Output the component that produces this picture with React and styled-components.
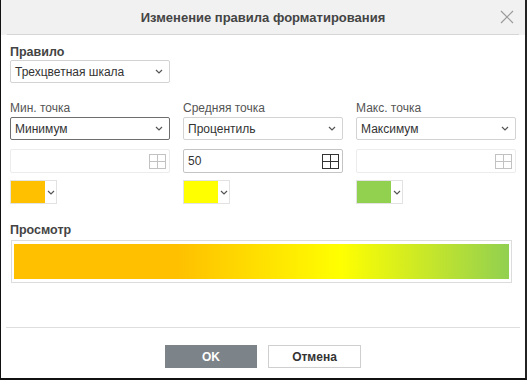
import React from "react";
import styled, { createGlobalStyle } from "styled-components";

const GlobalStyle = createGlobalStyle`
  html, body {
    margin: 0;
    padding: 0;
    background: #ffffff;
  }
  body {
    font-family: "Liberation Sans", Arial, sans-serif;
  }
`;

const Frame = styled.div`
  box-sizing: border-box;
  width: 527px;
  height: 380px;
  background: #ffffff;
  border-left: 1px solid #111;
  border-right: 2px solid #222;
  border-bottom: 2px solid #111;
  display: flex;
  flex-direction: column;
`;

const Header = styled.div`
  background: #f1f1f1;
  padding: 0 6px;
`;

const HeaderInner = styled.div`
  height: 34px;
  display: grid;
  grid-template-columns: 1fr auto 1fr;
  align-items: center;
  border-bottom: 1px solid #d6d6d6;
`;

const Title = styled.div`
  grid-column: 2;
  font-size: 13px;
  font-weight: bold;
  color: #444;
`;

const Close = styled.button`
  justify-self: end;
  margin-right: 4px;
  width: 16px;
  height: 16px;
  padding: 0;
  border: 0;
  background: transparent;
  display: flex;
  align-items: center;
  justify-content: center;
`;

const Body = styled.div`
  flex: 1;
  padding: 9px 9px 0 9px;
  display: flex;
  flex-direction: column;
`;

const SectionLabel = styled.div`
  font-size: 12.5px;
  font-weight: bold;
  color: #444;
  height: 16px;
  line-height: 16px;
`;

const FieldLabel = styled.div`
  font-size: 12px;
  color: #555;
  height: 14px;
  line-height: 14px;
  margin-bottom: 2px;
`;

const SelectBox = styled.div`
  box-sizing: border-box;
  width: 160px;
  height: 23px;
  border: 1px solid ${(p) => (p.$focused ? "#6e6e6e" : "#d3d3d3")};
  border-radius: 2px;
  display: flex;
  align-items: center;
  justify-content: space-between;
  padding: 0 6px 0 4px;
  font-size: 12px;
  color: #333;
  background: #fff;
  margin-top: ${(p) => p.$mt || 0}px;
`;

const Columns = styled.div`
  display: grid;
  grid-template-columns: repeat(3, 160px);
  column-gap: 13px;
  margin-top: 18px;
`;

const Column = styled.div`
  display: flex;
  flex-direction: column;
`;

const InputBox = styled.div`
  box-sizing: border-box;
  width: 160px;
  height: 24px;
  margin-top: 9px;
  border: 1px solid ${(p) => (p.$disabled ? "#ececec" : "#c4c4c4")};
  border-radius: 2px;
  display: flex;
  align-items: center;
  justify-content: space-between;
  padding: 0 3px 0 4px;
  font-size: 12px;
  color: #333;
`;

const ColorPicker = styled.div`
  margin-top: 7px;
  width: 47px;
  height: 24px;
  box-sizing: border-box;
  border: 1px solid #e2e2e2;
  display: flex;
`;

const Swatch = styled.div`
  width: 34px;
  height: 100%;
  background: ${(p) => p.$color};
`;

const PickerArrow = styled.div`
  flex: 1;
  display: flex;
  align-items: center;
  justify-content: center;
  background: #fff;
`;

const PreviewLabel = styled(SectionLabel)`
  margin-top: 18px;
`;

const PreviewBox = styled.div`
  box-sizing: border-box;
  width: 501px;
  height: 43px;
  margin-top: 2px;
  margin-left: 1px;
  border: 1px solid #dcdcdc;
  padding: 3px 2px;
`;

const Gradient = styled.div`
  height: 100%;
  background: linear-gradient(
    to right,
    #ffc000 0%,
    #ffc000 33%,
    #ffff00 66%,
    #92d050 100%
  );
`;

const Footer = styled.div`
  padding: 0 5px;
`;

const FooterInner = styled.div`
  border-top: 1px solid #dedede;
  height: 51px;
  display: flex;
  justify-content: center;
  align-items: flex-start;
  gap: 11px;
  padding-top: 17px;
  box-sizing: border-box;
`;

const Button = styled.button`
  box-sizing: border-box;
  width: ${(p) => (p.$primary ? 92 : 93)}px;
  height: 23px;
  border: 1px solid ${(p) => (p.$primary ? "#7c8489" : "#cfcfcf")};
  background: ${(p) => (p.$primary ? "#7c8489" : "#fff")};
  color: ${(p) => (p.$primary ? "#fff" : "#333")};
  font-family: "Liberation Sans", Arial, sans-serif;
  font-size: 12px;
  font-weight: bold;
  padding: 0;
  cursor: pointer;
`;

function Chevron() {
  return (
    <svg width="8" height="5" viewBox="0 0 8 5">
      <path d="M1 1 L4 4 L7 1" fill="none" stroke="#555" strokeWidth="1.2" />
    </svg>
  );
}

function GridIcon({ dim }) {
  const c = dim ? "#c2c2c2" : "#333";
  return (
    <svg width="17" height="15" viewBox="0 0 17 15">
      <rect x="0.5" y="0.5" width="16" height="14" fill="none" stroke={c} />
      <line x1="8.5" y1="0.5" x2="8.5" y2="14.5" stroke={c} />
      <line x1="0.5" y1="7.5" x2="16.5" y2="7.5" stroke={c} />
    </svg>
  );
}

const points = [
  { label: "Мин. точка", type: "Минимум", value: "", color: "#ffc000", focused: true },
  { label: "Средняя точка", type: "Процентиль", value: "50", color: "#ffff00" },
  { label: "Макс. точка", type: "Максимум", value: "", color: "#92d050" },
];

export default function App() {
  return (
    <>
      <GlobalStyle />
      <Frame>
        <Header>
          <HeaderInner>
            <Title>Изменение правила форматирования</Title>
            <Close aria-label="close">
              <svg width="14" height="14" viewBox="0 0 14 14">
                <path d="M1 1 L13 13 M13 1 L1 13" stroke="#9a9a9a" strokeWidth="1.2" />
              </svg>
            </Close>
          </HeaderInner>
        </Header>
        <Body>
          <SectionLabel>Правило</SectionLabel>
          <SelectBox $mt={0}>
            <span>Трехцветная шкала</span>
            <Chevron />
          </SelectBox>
          <Columns>
            {points.map((p) => (
              <Column key={p.label}>
                <FieldLabel>{p.label}</FieldLabel>
                <SelectBox $focused={p.focused}>
                  <span>{p.type}</span>
                  <Chevron />
                </SelectBox>
                <InputBox $disabled={!p.value}>
                  <span>{p.value}</span>
                  <GridIcon dim={!p.value} />
                </InputBox>
                <ColorPicker>
                  <Swatch $color={p.color} />
                  <PickerArrow>
                    <Chevron />
                  </PickerArrow>
                </ColorPicker>
              </Column>
            ))}
          </Columns>
          <PreviewLabel>Просмотр</PreviewLabel>
          <PreviewBox>
            <Gradient />
          </PreviewBox>
        </Body>
        <Footer>
          <FooterInner>
            <Button $primary>OK</Button>
            <Button>Отмена</Button>
          </FooterInner>
        </Footer>
      </Frame>
    </>
  );
}
